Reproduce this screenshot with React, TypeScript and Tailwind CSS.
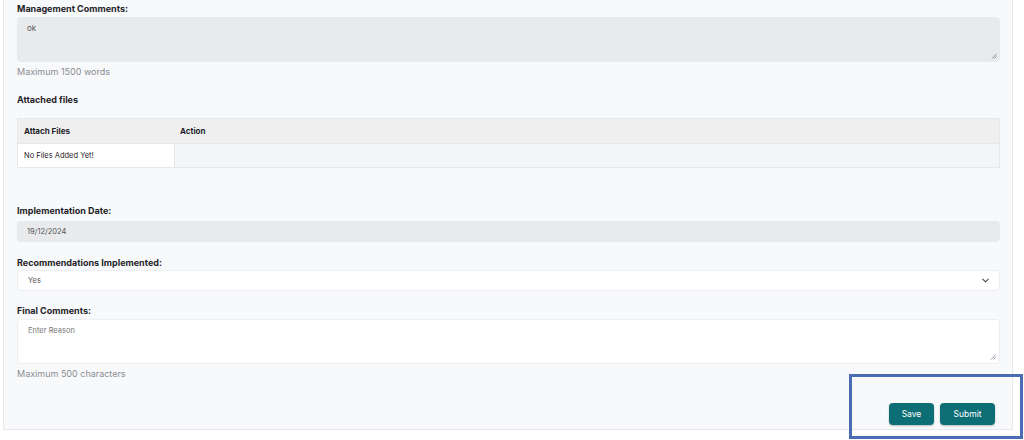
import { ChevronDown } from "lucide-react";

const Label = ({ children }: { children: React.ReactNode }) => (
  <div className="text-[9px] font-bold leading-[12px] text-[#1f2328]">{children}</div>
);

const Grip = () => (
  <svg className="absolute bottom-[3px] right-[3px]" width="6" height="6" viewBox="0 0 6 6">
    <path d="M5.5 1 L1 5.5 M5.5 3.5 L3.5 5.5" stroke="#6b7280" strokeWidth="0.8" />
  </svg>
);

export default function App() {
  return (
    <div className="relative w-[1024px] h-[440px] bg-white overflow-hidden" style={{ fontFamily: "Inter, 'Noto Sans', sans-serif" }}>
      <div className="ml-[3px] w-[1010px] h-[430px] bg-[#f8f9fb] border-l border-r border-b border-[#e6e8eb] pl-[13px] pr-[12px] pt-[3px]">
        <Label>Management Comments:</Label>
        <div className="relative mt-[2px] h-[45px] rounded-[4px] bg-[#e9eaec] px-[10px] pt-[5px] text-[8px] text-[#555]">
          ok
          <Grip />
        </div>
        <div className="mt-[4px] text-[9px] leading-[12px] text-[#8a8d91]">Maximum 1500 words</div>

        <div className="mt-[16px]">
          <Label>Attached files</Label>
        </div>
        <div className="mt-[12px] border border-[#e6e8eb] text-[8px]">
          <div className="flex h-[24px] bg-[#efefef] items-center font-bold text-[#1f2328]">
            <div className="w-[156px] pl-[6px]">Attach Files</div>
            <div className="pl-[6px]">Action</div>
          </div>
          <div className="flex h-[24px] border-t border-[#e6e8eb]">
            <div className="w-[156px] bg-white pl-[6px] flex items-center text-[7.5px] text-[#1f2328]">No Files Added Yet!</div>
            <div className="flex-1 bg-[#f4f5f7] border-l border-[#e6e8eb]" />
          </div>
        </div>

        <div className="mt-[37px]">
          <Label>Implementation Date:</Label>
        </div>
        <div className="mt-[4px] h-[21px] rounded-[4px] bg-[#e9eaec] px-[10px] flex items-center text-[7.5px] text-[#555]">19/12/2024</div>

        <div className="mt-[15px]">
          <Label>Recommendations Implemented:</Label>
        </div>
        <div className="mt-[1px] h-[21px] rounded-[4px] bg-white border border-[#eceef1] pl-[10px] pr-[8px] flex items-center justify-between text-[7.5px] text-[#555]">
          <span>Yes</span>
          <ChevronDown size={11} strokeWidth={2.2} className="text-[#444]" />
        </div>

        <div className="mt-[14px]">
          <Label>Final Comments:</Label>
        </div>
        <div className="relative mt-[2px] h-[45px] rounded-[4px] bg-white border border-[#eceef1] px-[10px] pt-[5px] text-[7.5px] text-[#777]">
          Enter Reason
          <Grip />
        </div>
        <div className="mt-[4px] text-[9px] leading-[12px] text-[#8a8d91]">Maximum 500 characters</div>

        <div className="mt-[23px] flex justify-end gap-[6px] pr-[5px]">
          <button className="h-[22px] w-[45px] rounded-[4px] bg-[#0e6e76] text-white text-[8.5px] shadow-[0_1px_2px_rgba(0,0,0,0.25)]">Save</button>
          <button className="h-[22px] w-[55px] rounded-[4px] bg-[#0e6e76] text-white text-[8.5px] shadow-[0_1px_2px_rgba(0,0,0,0.25)]">Submit</button>
        </div>
      </div>

      <div className="absolute left-[849px] top-[374px] w-[174px] h-[65px] border-[3px] border-[#4a6cb3]" />
    </div>
  );
}
